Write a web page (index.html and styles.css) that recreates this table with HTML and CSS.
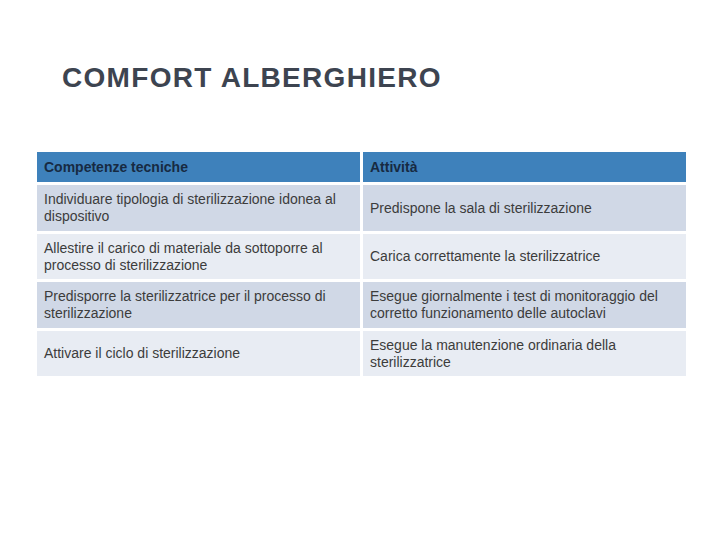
FILE: index.html
```html
<!DOCTYPE html>
<html>
<head>
<meta charset="utf-8">
<link rel="stylesheet" href="styles.css">
</head>
<body>
<div class="slide">
  <h1 class="title">COMFORT ALBERGHIERO</h1>
  <table class="grid">
    <thead>
      <tr><th>Competenze tecniche</th><th>Attività</th></tr>
    </thead>
    <tbody>
      <tr class="odd"><td>Individuare tipologia di sterilizzazione idonea al dispositivo</td><td>Predispone la sala di sterilizzazione</td></tr>
      <tr class="even"><td>Allestire il carico di materiale da sottoporre al processo di sterilizzazione</td><td>Carica correttamente la sterilizzatrice</td></tr>
      <tr class="odd"><td>Predisporre la sterilizzatrice per il processo di sterilizzazione</td><td>Esegue giornalmente i test di monitoraggio del corretto funzionamento delle autoclavi</td></tr>
      <tr class="even"><td>Attivare il ciclo di sterilizzazione</td><td>Esegue la manutenzione ordinaria della sterilizzatrice</td></tr>
    </tbody>
  </table>
</div>
</body>
</html>
```

FILE: styles.css
```css
html, body {
  margin: 0;
  padding: 0;
  background: #ffffff;
}
.slide {
  width: 720px;
  height: 540px;
  padding-top: 60px;
  box-sizing: border-box;
  font-family: "Liberation Sans", Arial, sans-serif;
}
.title {
  margin: 0 0 0 62px;
  font-size: 28px;
  font-weight: bold;
  color: #3d4450;
  line-height: 36px;
  letter-spacing: 1.3px;
}
.grid {
  margin: 53px 0 0 34px;
  border-collapse: separate;
  border-spacing: 3px;
  width: 655px;
  font-size: 14px;
  color: #3c3c3c;
}
.grid th {
  background: #3e81bb;
  color: #172a42;
  text-align: left;
  font-weight: bold;
  height: 30px;
  padding: 0 7px;
  box-sizing: border-box;
}
.grid th:first-child, .grid td:first-child {
  width: 323px;
}
.grid td {
  padding: 2px 7px;
  line-height: 17px;
  vertical-align: middle;
}
.grid tr.odd td {
  background: #d0d8e6;
  height: 46px;
  box-sizing: border-box;
}
.grid tr.even td {
  background: #e8ecf3;
  height: 45px;
  box-sizing: border-box;
}
```
